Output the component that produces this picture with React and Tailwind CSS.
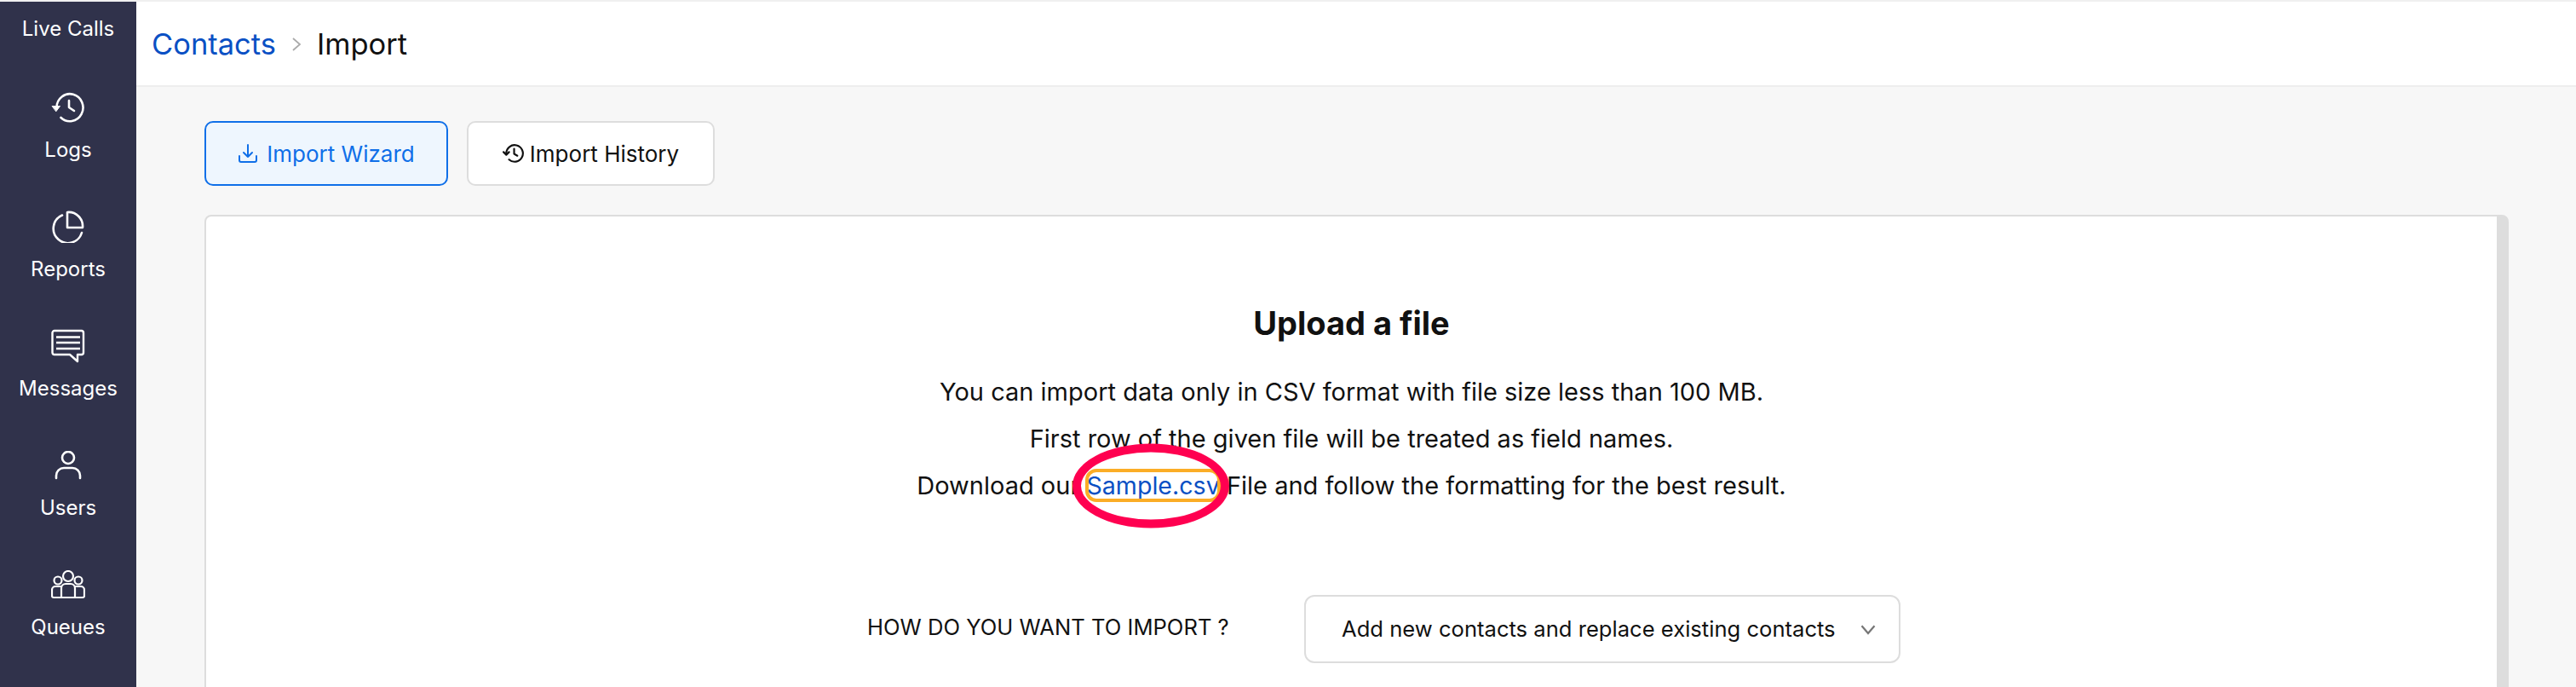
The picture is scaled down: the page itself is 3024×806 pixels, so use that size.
const NAV = [
  {
    label: "Logs",
    icon: (
      <svg viewBox="0 0 40 36" className="w-10 h-9" fill="none" stroke="currentColor" strokeWidth="2.6" strokeLinecap="round" strokeLinejoin="round">
        <path d="M6.5 18a15.500 16 0 1 1 5 12" />
        <path d="M1.5 16.500h9l-4.500 6z" fill="currentColor" strokeWidth="1" />
        <path d="M21 10v8l6 4" />
      </svg>
    ),
  },
  {
    label: "Reports",
    icon: (
      <svg viewBox="0 0 38 38" className="w-[38px] h-[38px]" fill="none" stroke="currentColor" strokeWidth="2.6" strokeLinecap="round" strokeLinejoin="round">
        <path d="M18 20V2a16.500 16.500 0 0 1 18 18z" />
        <path d="M12 5.500A17 17 0 1 0 35 26" />
      </svg>
    ),
  },
  {
    label: "Messages",
    icon: (
      <svg viewBox="0 0 40 40" className="w-10 h-10" fill="none" stroke="currentColor" strokeWidth="2.4" strokeLinejoin="round">
        <path d="M4 2h32a2.500 2.500 0 0 1 2 2.500v23a2.500 2.500 0 0 1-2 2.500h-5v8l-9-8H4a2.500 2.500 0 0 1-2.500-2.500v-23A2.500 2.500 0 0 1 4 2z" />
        <path d="M6 9.500h28M6 16h28M6 23h28" />
      </svg>
    ),
  },
  {
    label: "Users",
    icon: (
      <svg viewBox="0 0 32 34" className="w-8 h-[34px]" fill="none" stroke="currentColor" strokeWidth="2.6" strokeLinecap="round">
        <circle cx="16" cy="8" r="7" />
        <path d="M2 32v-3a9 9 0 0 1 9-9h10a9 9 0 0 1 9 9v3" />
      </svg>
    ),
  },
  {
    label: "Queues",
    icon: (
      <svg viewBox="0 0 40 34" className="w-10 h-[34px]" fill="none" stroke="currentColor" strokeWidth="2.2" strokeLinejoin="round">
        <circle cx="20" cy="7" r="6" />
        <circle cx="8" cy="12" r="4.500" />
        <circle cx="32" cy="12" r="4.500" />
        <path d="M12 32V21a5 5 0 0 1 5-5h6a5 5 0 0 1 5 5v11z" />
        <path d="M12 19H5a4 4 0 0 0-4 4v7a2 2 0 0 0 2 2h34a2 2 0 0 0 2-2v-7a4 4 0 0 0-4-4h-7" />
      </svg>
    ),
  },
];

function Sidebar() {
  return (
    <aside className="w-[160px] flex-shrink-0 bg-[#30324b] text-white text-[24px] leading-[28px] flex flex-col items-center">
      <div className="pt-[18px] pb-[50px]">Live Calls</div>
      {NAV.map((item) => (
        <div key={item.label} className="h-[140px] w-full flex flex-col items-center">
          <div className="h-[56px] flex items-center justify-center">{item.icon}</div>
          <div className="mt-[8px]">{item.label}</div>
        </div>
      ))}
    </aside>
  );
}

function Tabs() {
  return (
    <div className="flex gap-[22px]">
      <button className="w-[286px] h-[76px] flex items-center justify-center gap-[10px] rounded-[10px] border-2 border-[#0f6fe8] bg-[#eef6fe] text-[#0f6fe8] text-[26px]">
        <svg viewBox="0 0 24 24" className="w-[24px] h-[24px]" fill="none" stroke="currentColor" strokeWidth="2" strokeLinecap="round" strokeLinejoin="round">
          <path d="M2 15v5a2 2 0 0 0 2 2h16a2 2 0 0 0 2-2v-5" />
          <path d="M12 2v14M7 11l5 5 5-5" />
        </svg>
        Import Wizard
      </button>
      <button className="w-[291px] h-[76px] flex items-center justify-center gap-[6px] rounded-[10px] border-2 border-[#dddddd] bg-white text-[#111111] text-[26px]">
        <svg viewBox="0 0 24 24" className="w-[26px] h-[26px]" fill="none" stroke="currentColor" strokeWidth="2" strokeLinecap="round" strokeLinejoin="round">
          <path d="M4 12a9 9 0 1 1 3 6.700" />
          <path d="M1 10.500l3 3 3-3" />
          <path d="M12.500 7v5.500l3.500 2" />
        </svg>
        Import History
      </button>
    </div>
  );
}

function UploadCard() {
  return (
    <div className="mt-[34px] h-[600px] rounded-t-[8px] border-t-2 border-l-2 border-r-[14px] border-[#dddddd] bg-white text-[#111111] flex flex-col items-center">
      <h2 className="mt-[100px] text-[38px] leading-[50px] font-bold">Upload a file</h2>
      <div className="mt-[28px] text-[29px] leading-[55px] text-center">
        <p>You can import data only in CSV format with file size less than 100 MB.</p>
        <p>First row of the given file will be treated as field names.</p>
        <p>
          Download our{" "}
          <a className="relative inline-block text-[28.6px] leading-[37px] text-[#0a50c4] rounded-[12px] outline-[4px] -outline-offset-[3px] outline-[#fbad26]">
            Sample.csv
            <span className="absolute left-1/2 top-1/2 -ml-[3px] -translate-x-1/2 -translate-y-1/2 w-[184px] h-[99px] rounded-[50%] border-[10px] border-[#ff0050]" />
          </a>{" "}
          File and follow the formatting for the best result.
        </p>
      </div>
      <div className="mt-[101px] ml-[76px] flex items-center text-[25.6px]">
        <div className="w-[513px] pb-[4px]">HOW DO YOU WANT TO IMPORT ?</div>
        <div className="w-[700px] h-[80px] flex items-center justify-between pl-[42px] pr-[26px] rounded-[12px] border-2 border-[#dddddd]">
          <span>Add new contacts and replace existing contacts</span>
          <svg viewBox="0 0 16 16" className="w-[20px] h-[20px] text-[#777777]" fill="none" stroke="currentColor" strokeWidth="1.800">
            <path d="M2 5l6 7 6-7" />
          </svg>
        </div>
      </div>
    </div>
  );
}

export default function App() {
  return (
    <div className="h-[806px] w-[3024px] overflow-hidden bg-[#f7f7f7] font-['Inter',sans-serif]">
      <div className="h-[2px] bg-[#f0f0f0]" />
      <div className="flex h-[804px]">
        <Sidebar />
        <main className="flex-1 min-w-0">
          <header className="h-[100px] pt-[2px] bg-white border-b-2 border-[#eeeeee] flex items-center pl-[18px] text-[34.500px]">
            <span className="text-[#0a50c4]">Contacts</span>
            <svg viewBox="0 0 12 16" className="mx-[18px] w-[12px] h-[16px] text-[#aaaaaa]" fill="none" stroke="currentColor" strokeWidth="1.800">
              <path d="M2 1l8 7-8 7" />
            </svg>
            <span className="text-[#111111]">Import</span>
          </header>
          <div className="pl-[80px] pr-[79px] pt-[40px]">
            <Tabs />
            <UploadCard />
          </div>
        </main>
      </div>
    </div>
  );
}
